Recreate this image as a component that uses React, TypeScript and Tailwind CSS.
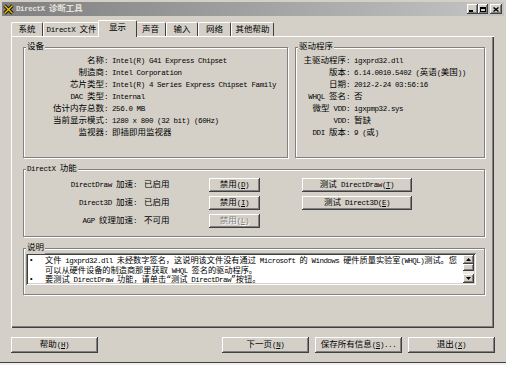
import React from 'react';

// runs of CJK text get a bigger size than the latin runs (SimSun look)
const CJK = /([\u2018-\u201d\u3000-\u303f\u4e00-\u9fff\uff00-\uffef]+)/;

function Tx({ s, small }: { s: string; small?: boolean }) {
  return (
    <span>
      {s.split(CJK).map((p, i) =>
        !p ? null : i % 2 === 1 ? (
          <span key={i} className={`${small ? 'text-[8.2px]' : 'text-[8.5px]'} tracking-[0px]`}>{p}</span>
        ) : (
          <span key={i}>{p}</span>
        ),
      )}
    </span>
  );
}

const raised =
  'bg-[#d4d0c8] shadow-[inset_-1px_-1px_#404040,inset_1px_1px_#ffffff,inset_-2px_-2px_#808080,inset_2px_2px_#d4d0c8]';

interface BtnProps {
  pre: string;
  k: string;
  post?: string;
  w: string;
  h?: string;
  disabled?: boolean;
}

function Btn({ pre, k, post = ')', w, h = 'h-[14px]', disabled }: BtnProps) {
  return (
    <div
      className={`${w} ${h} ${raised} flex items-center justify-center whitespace-nowrap leading-[12px] ${
        disabled ? 'text-[#808080] [text-shadow:1px_1px_#ffffff]' : ''
      }`}
    >
      <span>
        <Tx s={pre} />
        <u>{k}</u>
        <Tx s={post} />
      </span>
    </div>
  );
}

function Group({ title, className, children }: { title: string; className: string; children?: React.ReactNode }) {
  return (
    <div className={`relative border border-[#808080] shadow-[inset_1px_1px_#ffffff,1px_1px_#ffffff] ${className}`}>
      <span className="absolute -top-[7px] left-[2px] bg-[#d4d0c8] px-[1px] leading-[12px] whitespace-nowrap">
        <Tx s={title} />
      </span>
      {children}
    </div>
  );
}

const device: [string, string][] = [
  ['名称:', 'Intel(R) G41 Express Chipset'],
  ['制造商:', 'Intel Corporation'],
  ['芯片类型:', 'Intel(R) 4 Series Express Chipset Family'],
  ['DAC 类型:', 'Internal'],
  ['估计内存总数:', '256.0 MB'],
  ['当前显示模式:', '1280 x 800 (32 bit) (60Hz)'],
  ['监视器:', '即插即用监视器'],
];

const driver: [string, string][] = [
  ['主驱动程序:', 'igxprd32.dll'],
  ['版本:', '6.14.0010.5402 (英语(美国))'],
  ['日期:', '2012-2-24 03:56:16'],
  ['WHQL 签名:', '否'],
  ['微型 VDD:', 'igxpmp32.sys'],
  ['VDD:', '暂缺'],
  ['DDI 版本:', '9 (或)'],
];

const tabs = [
  { t: '系统', w: 'w-[32px]' },
  { t: 'DirectX 文件', w: 'w-[57px]' },
  { t: '显示', w: 'w-[39px]', active: true },
  { t: '声音', w: 'w-[31px]' },
  { t: '输入', w: 'w-[32px]' },
  { t: '网络', w: 'w-[33px]' },
  { t: '其他帮助', w: 'w-[43px]' },
];

function Arrow({ up }: { up?: boolean }) {
  return (
    <div className={`h-[9px] w-[11px] ${raised} flex items-center justify-center`}>
      <svg width="5" height="3" viewBox="0 0 5 3">
        <path d={up ? 'M0 3 L2.5 0 L5 3 Z' : 'M0 0 L2.5 3 L5 0 Z'} fill="#000" />
      </svg>
    </div>
  );
}

export default function App() {
  return (
    <div className="w-[506px] h-[365px] bg-[#f0f0f0] font-['Liberation_Mono','Noto_Sans_CJK_SC',monospace] text-[7.5px] tracking-[-0.4px] text-black">
      <div className="h-[363px] bg-[#d4d0c8] border-b border-[#404040] flex flex-col">
        {/* 标题栏 */}
        <div className="mx-[2px] mt-[2px] h-[14px] bg-gradient-to-r from-[#808080] to-[#c4c4c4] flex items-center px-[1px]">
          <svg width="11" height="11" viewBox="0 0 11 11" className="flex-shrink-0">
            <path d="M1.5 1.5 L9.5 9.5 M9.5 1.5 L1.5 9.5" stroke="#111" strokeWidth="3.2" />
            <path d="M1.5 1.5 L9.5 9.5 M9.5 1.5 L1.5 9.5" stroke="#f2c200" strokeWidth="1.4" />
          </svg>
          <span className="ml-[2px] font-bold text-[#e4e2dc] leading-[12px] whitespace-nowrap">
            <Tx s="DirectX 诊断工具" />
          </span>
          <div className="ml-auto flex items-center mr-[1px]">
            <div className={`w-[11px] h-[10px] ${raised} flex items-end pl-[2px] pb-[2px]`}>
              <div className="w-[4px] h-[2px] bg-black" />
            </div>
            <div className={`w-[10px] h-[10px] ${raised} flex items-center justify-center`}>
              <div className="w-[6px] h-[5px] border border-t-2 border-black" />
            </div>
            <div className={`ml-[2px] w-[12px] h-[10px] ${raised} flex items-center justify-center`}>
              <svg width="6" height="5" viewBox="0 0 6 5">
                <path d="M0.5 0.5 L5.5 4.5 M5.5 0.5 L0.5 4.5" stroke="#000" strokeWidth="1.4" />
              </svg>
            </div>
          </div>
        </div>

        {/* 标签页 */}
        <div className="h-[20px] pl-[11px] flex items-end">
          {tabs.map(tab => (
            <div
              key={tab.t}
              className={`${tab.w} flex items-center justify-center whitespace-nowrap leading-[12px] border-t border-l border-white border-r border-r-[#404040] rounded-t-[2px] bg-[#d4d0c8] ${
                tab.active ? 'relative z-10 h-[17px] -mx-[2px] -mb-[1px] pb-[2px]' : 'h-[14px]'
              }`}
            >
              <Tx s={tab.t} />
            </div>
          ))}
        </div>

        {/* 显示页 */}
        <div className="ml-[11px] w-[483px] h-[292px] shadow-[inset_1px_1px_#ffffff,inset_-1px_-1px_#404040,inset_-2px_-2px_#808080] pt-[11px] pl-[12px]">
          <div className="flex gap-[7px]">
            <Group title="设备" className="w-[265px] h-[111px]">
              <div className="pt-[7px] flex flex-col">
                {device.map(([l, v]) => (
                  <div key={l} className="flex h-[12px] leading-[12px] whitespace-nowrap">
                    <span className="w-[84px] text-right"><Tx s={l} /></span>
                    <span className="ml-[4px]"><Tx s={v} /></span>
                  </div>
                ))}
              </div>
            </Group>
            <Group title="驱动程序" className="w-[190px] h-[111px]">
              <div className="pt-[7px] flex flex-col">
                {driver.map(([l, v]) => (
                  <div key={l} className="flex h-[12px] leading-[12px] whitespace-nowrap">
                    <span className="w-[54px] text-right"><Tx s={l} /></span>
                    <span className="ml-[4px]"><Tx s={v} /></span>
                  </div>
                ))}
              </div>
            </Group>
          </div>

          <Group title="DirectX 功能" className="mt-[11px] w-[462px] h-[68px]">
            <div className="pt-[8px] flex flex-col gap-[4px]">
              <div className="flex items-center h-[14px] whitespace-nowrap leading-[12px]">
                <span className="w-[113px] text-right"><Tx s="DirectDraw 加速:" /></span>
                <span className="ml-[7px] w-[65px]"><Tx s="已启用" /></span>
                <Btn pre="禁用(" k="D" w="w-[51px]" />
                <div className="ml-[42px]">
                  <Btn pre="测试 DirectDraw(" k="T" w="w-[110px]" />
                </div>
              </div>
              <div className="flex items-center h-[14px] whitespace-nowrap leading-[12px]">
                <span className="w-[113px] text-right"><Tx s="Direct3D 加速:" /></span>
                <span className="ml-[7px] w-[65px]"><Tx s="已启用" /></span>
                <Btn pre="禁用(" k="I" w="w-[51px]" />
                <div className="ml-[42px]">
                  <Btn pre="测试 Direct3D(" k="E" w="w-[110px]" />
                </div>
              </div>
              <div className="flex items-center h-[14px] whitespace-nowrap leading-[12px]">
                <span className="w-[113px] text-right"><Tx s="AGP 纹理加速:" /></span>
                <span className="ml-[7px] w-[65px]"><Tx s="不可用" /></span>
                <Btn pre="禁用(" k="L" w="w-[51px]" disabled />
              </div>
            </div>
          </Group>

          <Group title="说明" className="mt-[11px] w-[462px] h-[47px]">
            <div className="ml-[2px] mt-[4px] w-[450px] h-[32px] bg-white p-[2px] flex shadow-[inset_1px_1px_#808080,inset_-1px_-1px_#ffffff,inset_2px_2px_#404040,inset_-2px_-2px_#d4d0c8]">
              <div className="flex-1 overflow-hidden pl-[1px] pt-[1px]">
                {[
                  { b: true, s: '文件 igxprd32.dll 未经数字签名，这说明该文件没有通过 Microsoft 的 Windows 硬件质量实验室(WHQL)测试。您' },
                  { b: false, s: '可以从硬件设备的制造商那里获取 WHQL 签名的驱动程序。' },
                  { b: true, s: '要测试 DirectDraw 功能，请单击“测试 DirectDraw”按钮。' },
                ].map((ln, i) => (
                  <div key={i} className="flex h-[9.5px] leading-[9.5px] whitespace-nowrap">
                    <span className="w-[16px] flex-shrink-0">{ln.b ? '•' : ''}</span>
                    <span className="tracking-[-0.55px]"><Tx s={ln.s} small /></span>
                  </div>
                ))}
              </div>
              <div className="w-[11px] flex flex-col">
                <Arrow up />
                <div className={`h-[7px] w-[11px] ${raised}`} />
                <div className="flex-1 bg-[#ebe9e4]" />
                <Arrow />
              </div>
            </div>
          </Group>
        </div>

        {/* 底部按钮 */}
        <div className="mt-[9px] px-[11px] flex gap-[6px]">
          <Btn pre="帮助(" k="H" w="w-[87px]" h="h-[16px]" />
          <div className="flex-1" />
          <Btn pre="下一页(" k="N" w="w-[87px]" h="h-[16px]" />
          <Btn pre="保存所有信息(" k="S" post=")..." w="w-[87px]" h="h-[16px]" />
          <Btn pre="退出(" k="X" w="w-[87px]" h="h-[16px]" />
        </div>
      </div>
    </div>
  );
}
